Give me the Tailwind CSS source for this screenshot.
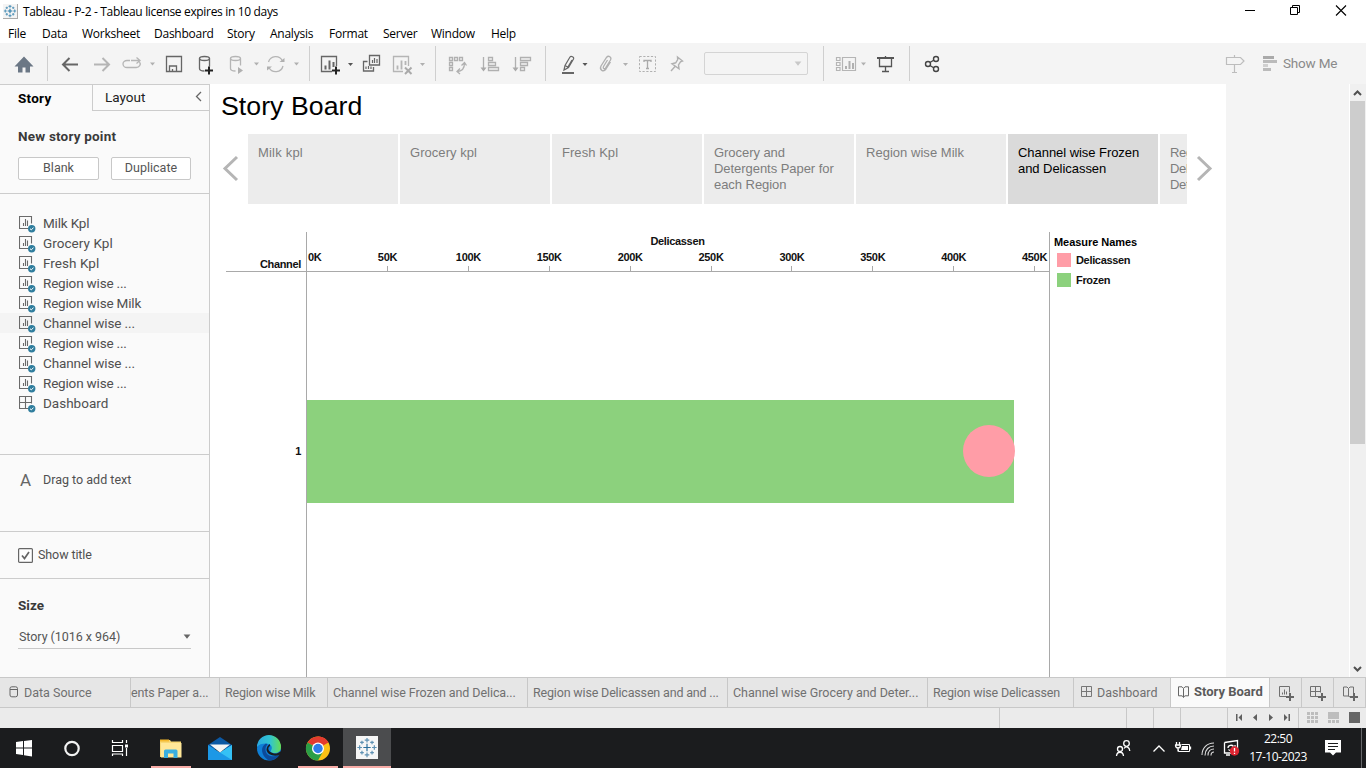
<!DOCTYPE html>
<html lang="en">
<head>
<meta charset="utf-8">
<title>Tableau - P-2</title>
<script src="https://cdn.jsdelivr.net/npm/@tailwindcss/browser@4"></script>
</head>
<body class="w-[1366px] h-[768px] overflow-hidden bg-white flex flex-col whitespace-nowrap">
<svg width="0" height="0" class="absolute">
  <symbol id="sheet" viewBox="0 0 17 17"><path d="M9.5 12.5H.5V.5h12v7M4.5 10V7M6.5 10V3M8.500 10V4.500" fill="none" stroke="#6a6a6a" stroke-width="1.100"/><circle cx="12.700" cy="12.700" r="3.700" fill="#2f7d9d"/><path d="M11 12.700l1.300 1.200 2.200-2.300" fill="none" stroke="#fff"/></symbol>
  <symbol id="dash" viewBox="0 0 17 17"><path d="M9.500 12.500H.5V.5h12v7M6.500 .5v12M.5 6.500h12" fill="none" stroke="#6a6a6a" stroke-width="1.100"/><circle cx="12.700" cy="12.700" r="3.700" fill="#2f7d9d"/><path d="M11 12.700l1.300 1.200 2.200-2.300" fill="none" stroke="#fff"/></symbol>
  <symbol id="tri" viewBox="0 0 6 4"><path d="M.3 .3h5.400L3 3.700z" fill="currentColor"/></symbol>
  <symbol id="tab" viewBox="0 0 24 24"><path d="M12 8v8M8 12h8" stroke="currentColor" fill="none"/><path d="M12 1.500v5M9.500 4h5M12 17.500v5M9.500 20h5M1.500 12h5M4 9.500v5M17.500 12h5M20 9.500v5M6.500 4.500v4M4.500 6.500h4M17.500 4.500v4M15.500 6.500h4M6.500 15.500v4M4.500 17.500h4M17.500 15.500v4M15.500 17.500h4" stroke="currentColor" fill="none" opacity=".75"/></symbol>
</svg>

<!-- Title bar -->
<header class="h-[22px] flex items-center font-['Open_Sans','Noto_Sans',sans-serif] text-black">
  <div class="ml-[3px] mt-px w-[15px] h-[15px] bg-[#f4f4f4] border-r border-b border-[#aaa] text-[#2779a8]"><svg class="w-[14px] h-[14px]"><use href="#tab" stroke-width="1.900"/></svg></div>
  <span class="ml-[5px] mt-[2px] text-[12px] tracking-[-0.33px]">Tableau - P-2 - Tableau license expires in 10 days</span>
  <svg class="ml-auto w-[136px] h-[22px]" viewBox="1230 0 136 22" fill="none" stroke="#000"><path d="M1245 10.500h10"/><path d="M1290.500 7.500h7v7h-7zM1292.500 7.500v-2h7v7h-2"/><path d="M1336 5.500l10 10M1346 5.500l-10 10" stroke-width="1.100"/></svg>
</header>
<!-- Menu -->
<nav class="h-[21px] flex items-center font-['Open_Sans','Noto_Sans',sans-serif] text-[12px] tracking-[-0.25px] text-black pl-[8px] pt-[3px]">
  <span class="w-[34px]">File</span><span class="w-[40px]">Data</span><span class="w-[72px]">Worksheet</span><span class="w-[73px]">Dashboard</span><span class="w-[43px]">Story</span><span class="w-[59px]">Analysis</span><span class="w-[54px]">Format</span><span class="w-[48px]">Server</span><span class="w-[60px]">Window</span><span>Help</span>
</nav>

<!-- Toolbar -->
<div class="h-[41px] flex items-center bg-[#f4f4f4] text-[#666] shrink-0">
  <svg class="w-[47px] h-[41px]" viewBox="0 43 47 41"><path d="M24 56.500L14.500 66.500H18v6h4.500v-5h3v5H30v-6h3.500z" fill="#6b7785"/></svg>
  <div class="w-px h-[35px] bg-[#cfcfcf]"></div>
  <svg class="w-[42px] h-[41px]" viewBox="48 43 42 41"><path d="M78 64.500H63M69.500 58L63 64.500l6.500 6.500" fill="none" stroke="#666" stroke-width="2"/></svg>
  <svg class="w-[26px] h-[41px]" viewBox="90 43 26 41"><path d="M94 64.500h15M102.500 58l6.500 6.500-6.500 6.500" fill="none" stroke="#b5b5b5" stroke-width="2"/></svg>
  <svg class="w-[44px] h-[41px]" viewBox="116 43 44 41"><path d="M130 60.500h-3a4 3.500 0 000 7h9a4 3.500 0 003.500-5.500M131 60.500h8M136.500 57.500l3.500 3-3.500 3" fill="none" stroke="#b5b5b5" stroke-width="1.300"/><path d="M150 62.500h5l-2.500 3z" fill="#b0b0b0"/></svg>
  <svg class="w-[30px] h-[41px]" viewBox="160 43 30 41"><path d="M166.500 56.500h15v15h-15zM169.500 71v-5h7v5M172.500 71v-2" fill="none" stroke="#666" stroke-width="1.300"/></svg>
  <svg class="w-[32px] h-[41px]" viewBox="190 43 32 41"><path d="M199.500 58.500v10c0 1 1.500 2.500 5 2.500M209.500 58.500v8" fill="none" stroke="#666" stroke-width="1.300"/><ellipse cx="204.500" cy="58.500" rx="5" ry="2" fill="none" stroke="#666" stroke-width="1.300"/><path d="M209 66.500v8M205 70.500h8" stroke="#222" stroke-width="2"/></svg>
  <svg class="w-[42px] h-[41px]" viewBox="222 43 42 41"><path d="M230.500 58.500v10c0 1 1.500 2.500 5 2.500M240.500 58.500v7" fill="none" stroke="#b5b5b5" stroke-width="1.300"/><ellipse cx="235.500" cy="58.500" rx="5" ry="2" fill="none" stroke="#b5b5b5" stroke-width="1.300"/><path d="M238 67l5 3.500-5 3.500zM254 62.500h5l-2.500 3z" fill="#b0b0b0"/></svg>
  <svg class="w-[45px] h-[41px]" viewBox="264 43 45 41"><path d="M268.500 62a7.500 7.500 0 0114 -1M283 66a7.500 7.500 0 01-14 1.500" fill="none" stroke="#b5b5b5" stroke-width="1.300"/><path d="M279.500 62h5v-4zM272 66.500h-5v4zM294 62.500h5l-2.500 3z" fill="#b0b0b0"/></svg>
  <div class="w-px h-[35px] bg-[#cfcfcf]"></div>
  <svg class="w-[49px] h-[41px]" viewBox="310 43 49 41"><path d="M332 71.500h-10.500v-15h15V66" fill="none" stroke="#666" stroke-width="1.300"/><path d="M325.500 69.500v-4M329.500 69.500v-9M333.500 67v-5" stroke="#666" stroke-width="2"/><path d="M336 66.500v8M332 70.500h8" stroke="#222" stroke-width="2"/><path d="M348 63h5l-2.500 3z" fill="#555"/></svg>
  <svg class="w-[28px] h-[41px]" viewBox="359 43 28 41"><path d="M369.500 55.500h10v9.500h-10zM367.500 61.500h-4v9.500h10v-4" fill="none" stroke="#666" stroke-width="1.300"/><path d="M372.500 63v-3M374.500 63v-5M377 63v-4M366 69v-2.500M368.500 69v-3M371 69v-2.500" stroke="#666" stroke-width="1.200"/></svg>
  <svg class="w-[48px] h-[41px]" viewBox="387 43 48 41"><path d="M403 71.500h-9.500v-15h15V66" fill="none" stroke="#b5b5b5" stroke-width="1.300"/><path d="M397.500 69.500v-4M401.500 69.500v-9M405.500 65v-4" stroke="#b5b5b5" stroke-width="1.800"/><path d="M405 67.500l6.500 6.500M411.500 67.500L405 74" stroke="#aaa" stroke-width="2"/><path d="M420 63h5l-2.500 3z" fill="#b0b0b0"/></svg>
  <div class="w-px h-[35px] bg-[#cfcfcf]"></div>
  <svg class="w-[109px] h-[41px]" viewBox="436 43 109 41" fill="none" stroke="#b0b0b0" stroke-width="1.300"><path d="M449.500 57.500h3v3h-3zM454.500 57.500h3v3h-3zM459.500 57.500h3v3h-3zM449.500 62.500h3v3h-3zM449.500 67.500h3v3h-3zM464.500 63c0 5-2.500 8.500-7.500 8.500M461.500 65.500l3-3 2 3M460 68.500l-3 3 3 2.500"/><path d="M483.500 57v13M515.500 57v13"/><path d="M480.500 67.500h6l-3 4zM512.500 67.500h6l-3 4z" fill="#aaa" stroke="none"/><path d="M488.500 57.500h4v3h-4zM488.500 62.500h7v3h-7zM488.500 67.500h10v3h-10zM520.500 57.500h10v3h-10zM520.500 62.500h7v3h-7zM520.500 67.500h4v3h-4z"/></svg>
  <div class="w-px h-[35px] bg-[#cfcfcf]"></div>
  <svg class="w-[48px] h-[41px]" viewBox="546 43 48 41"><path d="M564 70l1-4.500 5-8.500c1-1.500 4.500 0 3.500 2l-5 8.500zM565 65.500l3.500 2M567 68.500l5-8.500" fill="none" stroke="#666" stroke-width="1.200"/><path d="M562 73h12" stroke="#666" stroke-width="2"/><path d="M582.500 63h5l-2.500 3z" fill="#555"/></svg>
  <svg class="w-[38px] h-[41px]" viewBox="594 43 38 41"><path d="M607.500 60l-4 6.500c-1 2 1 3 2 1.500l5-8c1.500-3-2-5-4-2.500l-5.500 8.500c-2 4 2.500 6.500 5 3l4.500-7" fill="none" stroke="#b0b0b0" stroke-width="1.300"/><path d="M623 63h5l-2.500 3z" fill="#b0b0b0"/></svg>
  <svg class="w-[28px] h-[41px]" viewBox="632 43 28 41"><path d="M639.500 56.500h16v15h-16z" stroke-dasharray="2.200 1.600" fill="none" stroke="#b0b0b0"/><path d="M644 62v-1.500h7V62M647.500 60.500v8M646 68.500h3" fill="none" stroke="#aaa" stroke-width="1.300"/></svg>
  <svg class="w-[44px] h-[41px]" viewBox="660 43 44 41"><path d="M677.500 57l5 4-2 .8-2 3 .5 4-7-5 3.700-1 2-3.200zM675 66.500L671 71" fill="none" stroke="#b0b0b0" stroke-width="1.400"/></svg>
  <div class="w-[104px] h-[23px] border border-[#d4d4d4] rounded-[2px] flex items-center justify-end pr-[5px] text-[#c8c8c8]"><svg class="w-[8px] h-[5px]"><use href="#tri"/></svg></div>
  <div class="w-px h-[35px] bg-[#cfcfcf] ml-[15px]"></div>
  <svg class="w-[47px] h-[41px]" viewBox="824 43 47 41"><path d="M836.500 57.500h3.500v3h-3.500zM836.500 62.500h3.500v3h-3.500zM836.500 67.500h3.500v3h-3.500zM842.500 57.500h13v13h-13z" fill="none" stroke="#b5b5b5" stroke-width="1.200"/><path d="M846 69v-3M849.500 69v-8M853 69v-6" stroke="#b0b0b0" stroke-width="2"/><path d="M861 62.500h5l-2.500 3z" fill="#b0b0b0"/></svg>
  <svg class="w-[38px] h-[41px]" viewBox="871 43 38 41"><path d="M877 58h17" stroke="#555" stroke-width="2"/><path d="M879.500 59v7.500h12V59M885.500 56v2M885.500 67v5M882 71.500h7" fill="none" stroke="#555" stroke-width="1.300"/></svg>
  <div class="w-px h-[35px] bg-[#cfcfcf]"></div>
  <svg class="w-[42px] h-[41px]" viewBox="910 43 42 41" fill="none" stroke="#444" stroke-width="1.400"><circle cx="928" cy="64" r="2.500"/><circle cx="936" cy="59" r="2.500"/><circle cx="936" cy="69" r="2.500"/><path d="M930 62.500l4-2.500M930 65.500l4 2.500"/></svg>
  <svg class="ml-auto w-[62px] h-[41px]" viewBox="1221 43 62 41"><path d="M1226.500 57.500h14l3.500 3.500-3.500 3.500h-14zM1234.500 55v2M1234.500 65v7.500M1232 72.500h5" fill="none" stroke="#bdbdbd" stroke-width="1.200"/><path d="M1263 56h11v3h-11z" fill="#aaa"/><path d="M1263 60h14v3h-14z" fill="#bbb"/><path d="M1263 64h5v3h-5z" fill="#d0d0d0"/><path d="M1263 68h8v3h-8z" fill="#bbb"/></svg>
  <span class="w-[83px] font-['Roboto',sans-serif] text-[13.500px] tracking-[-0.2px] text-[#8a8a8a]">Show Me</span>
</div>

<main class="h-[593px] flex">
  <!-- Side pane -->
  <aside class="w-[210px] h-full bg-[#fafafa] border-r border-[#ccc] flex flex-col font-['Roboto',sans-serif] text-[#505050]">
    <div class="flex h-[27px] border-t border-[#ccc]">
      <div class="w-[92px] pl-[18px] pt-[3px] text-[13.500px] leading-[20px] font-bold text-black tracking-[0.25px]">Story</div>
      <div class="flex-1 border-l border-b border-[#ccc] pl-[12px] pt-[2px] pr-[7px] flex justify-between text-[13.5px] text-[#222]"><span>Layout</span><svg class="w-[7px] h-[12px] mt-[4px]" viewBox="0 0 7 12"><path d="M6 1L1.500 5.500 6 10" fill="none" stroke="#666" stroke-width="1.300"/></svg></div>
    </div>
    <div class="h-[83px] border-b border-[#ccc] px-[18px] pt-[15px]">
      <div class="h-[31px] text-[13.500px] leading-[20px] font-bold text-[#3a3a3a] tracking-[0.2px]">New story point</div>
      <div class="flex justify-between text-[12.500px] text-[#555]">
        <button class="w-[81px] h-[23px] border border-[#c8c8c8] rounded-[2px] bg-white">Blank</button>
        <button class="w-[80px] h-[23px] border border-[#c8c8c8] rounded-[2px] bg-white">Duplicate</button>
      </div>
    </div>
    <div class="h-[261px] border-b border-[#ccc] pt-[19px] text-[13.500px] leading-[20px] tracking-[-0.18px]">
      <div class="h-5 flex pl-[19px] gap-[7px]"><svg class="w-[17px] h-[17px] mt-[3px]"><use href="#sheet"/></svg><span>Milk Kpl</span></div>
      <div class="h-5 flex pl-[19px] gap-[7px]"><svg class="w-[17px] h-[17px] mt-[3px]"><use href="#sheet"/></svg><span class="tracking-[0.05px]">Grocery Kpl</span></div>
      <div class="h-5 flex pl-[19px] gap-[7px]"><svg class="w-[17px] h-[17px] mt-[3px]"><use href="#sheet"/></svg><span class="tracking-[0.05px]">Fresh Kpl</span></div>
      <div class="h-5 flex pl-[19px] gap-[7px]"><svg class="w-[17px] h-[17px] mt-[3px]"><use href="#sheet"/></svg><span>Region wise ...</span></div>
      <div class="h-5 flex pl-[19px] gap-[7px]"><svg class="w-[17px] h-[17px] mt-[3px]"><use href="#sheet"/></svg><span>Region wise Milk</span></div>
      <div class="h-5 flex pl-[19px] gap-[7px] bg-[#f4f4f4]"><svg class="w-[17px] h-[17px] mt-[3px]"><use href="#sheet"/></svg><span class="tracking-[-0.12px]">Channel wise ...</span></div>
      <div class="h-5 flex pl-[19px] gap-[7px]"><svg class="w-[17px] h-[17px] mt-[3px]"><use href="#sheet"/></svg><span>Region wise ...</span></div>
      <div class="h-5 flex pl-[19px] gap-[7px]"><svg class="w-[17px] h-[17px] mt-[3px]"><use href="#sheet"/></svg><span class="tracking-[-0.12px]">Channel wise ...</span></div>
      <div class="h-5 flex pl-[19px] gap-[7px]"><svg class="w-[17px] h-[17px] mt-[3px]"><use href="#sheet"/></svg><span>Region wise ...</span></div>
      <div class="h-5 flex pl-[19px] gap-[7px]"><svg class="w-[17px] h-[17px] mt-[3px]"><use href="#dash"/></svg><span class="tracking-normal">Dashboard</span></div>
    </div>
    <div class="h-[77px] border-b border-[#ccc] pl-[20px] pt-[15px] flex text-[12.500px] leading-[20px]"><span class="w-[23px] text-[17px] text-[#666] leading-[20px]">A</span><span>Drag to add text</span></div>
    <div class="h-[47px] border-b border-[#ccc] pl-[18px] flex items-center gap-[5px] text-[12.500px] tracking-[-0.1px]"><svg class="w-[15px] h-[15px]" viewBox="0 0 15 15" fill="none"><rect x=".6" y=".6" width="13.800" height="13.800" rx="1" fill="#fff" stroke="#666" stroke-width="1.200"/><path d="M4 7.500l2.500 3L11 4" stroke="#666" stroke-width="1.700"/></svg><span>Show title</span></div>
    <div class="px-[18px] pt-[16px]">
      <div class="text-[13.500px] leading-[20px] font-bold text-[#3a3a3a]">Size</div>
      <div class="mt-[10px] h-[24px] border-b border-[#c8c8c8] pl-px flex items-center justify-between text-[12.500px] text-[#555]"><span class="pt-px tracking-[-0.05px]">Story (1016 x 964)</span><svg class="w-[8px] h-[5px] text-[#666]"><use href="#tri"/></svg></div>
    </div>
  </aside>

  <!-- Story canvas -->
  <section class="w-[1016px] h-full bg-white flex flex-col font-['Liberation_Sans',Arial,sans-serif]">
    <h1 class="h-[50px] pl-[11px] pt-[6px] text-[26.67px] leading-[32px] text-black tracking-[0.05px]">Story Board</h1>
    <div class="h-[70px] flex">
      <svg class="w-[38px] h-[70px]" viewBox="210 134 38 70"><path d="M237 157L225 168.500l12 11.500" fill="none" stroke="#b5b5b5" stroke-width="3"/></svg>
      <div class="w-[939px] flex gap-[2px] overflow-hidden text-[13px] leading-[16px] text-[#7d7d7d] tracking-[-0.05px]">
        <div class="w-[150px] shrink-0 bg-[#ececec] pl-[10px] pt-[11px] tracking-[0.2px]">Milk kpl</div>
        <div class="w-[150px] shrink-0 bg-[#ececec] pl-[10px] pt-[11px] tracking-[0.05px]">Grocery kpl</div>
        <div class="w-[150px] shrink-0 bg-[#ececec] pl-[10px] pt-[11px] tracking-[0.05px]">Fresh Kpl</div>
        <div class="w-[150px] shrink-0 bg-[#ececec] pl-[10px] pt-[11px]">Grocery and<br>Detergents Paper for<br>each Region</div>
        <div class="w-[150px] shrink-0 bg-[#ececec] pl-[10px] pt-[11px] tracking-[0.03px]">Region wise Milk</div>
        <div class="w-[150px] shrink-0 bg-[#dadada] pl-[10px] pt-[11px] text-black">Channel wise Frozen<br>and Delicassen</div>
        <div class="w-[150px] shrink-0 bg-[#ececec] pl-[10px] pt-[11px] tracking-[-0.3px]">Region wise<br>Delicassen and<br>Detergents</div>
      </div>
      <svg class="w-[39px] h-[70px]" viewBox="1187 134 39 70"><path d="M1198 157L1210 168.500l-12 11.500" fill="none" stroke="#b5b5b5" stroke-width="3"/></svg>
    </div>
    <div class="mt-[28px] flex flex-1 pl-[16px] text-[11px] text-[#111] font-bold tracking-[-0.33px]">
      <div class="w-[81px] border-r border-[#a9a9a9] flex flex-col text-right pr-[5px]">
        <div class="-mr-[6px] pr-[6px] h-[40px] border-b border-[#a9a9a9] pt-[24px] leading-[16px]">Channel</div>
        <div class="h-[359px] flex items-center justify-end">1</div>
      </div>
      <div class="w-[743px] border-r border-[#a9a9a9]">
        <div class="-mr-px h-[40px] border-b border-[#a9a9a9]">
          <div class="h-[17px] pt-px pr-[2px] leading-[16px] text-center">Delicassen</div>
          <div class="h-[17px] leading-[16px] flex text-center">
            <span class="w-[40px] pl-px text-left">0K</span><span class="w-[80.900px]">50K</span><span class="w-[80.900px]">100K</span><span class="w-[80.900px]">150K</span><span class="w-[80.900px]">200K</span><span class="w-[80.900px]">250K</span><span class="w-[80.900px]">300K</span><span class="w-[80.900px]">350K</span><span class="w-[80.900px]">400K</span><span class="flex-1 text-right pr-[3px]">450K</span>
          </div>
          <svg class="w-[743px] h-[5px]"><path d="M80.500 0v5M161.500 0v5M242.500 0v5M323.500 0v5M404.500 0v5M484.500 0v5M565.500 0v5M646.500 0v5M727.500 0v5" stroke="#a9a9a9"/></svg>
        </div>
        <svg class="w-[742px] h-[405px]" viewBox="307 272 742 405"><path d="M307 400h707v103H307z" fill="#8cd17d"/><circle cx="989" cy="451" r="26" fill="#ff9da7"/></svg>
      </div>
      <div class="pl-[4px] pt-[2px]">
        <div class="leading-[16px] text-black tracking-[-0.05px]">Measure Names</div>
        <div class="h-5 flex items-center pl-[3px] gap-[5px]"><i class="w-[14px] h-[14px] bg-[#ff9da7]"></i>Delicassen</div>
        <div class="h-5 flex items-center pl-[3px] gap-[5px]"><i class="w-[14px] h-[14px] bg-[#8cd17d]"></i>Frozen</div>
      </div>
    </div>
  </section>
  <div class="flex-1 bg-[#f4f4f4] border-r border-white"></div>
  <div class="w-[16px] bg-[#f0f0f0] flex flex-col">
    <svg class="w-[16px] h-[17px]" viewBox="0 0 16 17"><path d="M4 11l3.500-3.500L11 11" fill="none" stroke="#505050" stroke-width="2"/></svg>
    <div class="w-[15px] h-[343px] bg-[#cdcdcd]"></div>
    <svg class="w-[16px] h-[17px] mt-auto" viewBox="0 0 16 17"><path d="M4 7l3.500 3.500L11 7" fill="none" stroke="#505050" stroke-width="2"/></svg>
  </div>
</main>

<!-- Sheet tabs -->
<div class="h-[31px] shrink-0 bg-[#e6e6e6] border-y border-[#c8c8c8] flex leading-[29px] font-['Roboto',sans-serif] text-[12.500px] text-[#707070]">
  <div class="w-[131px] border-r border-[#c8c8c8] pl-[9px] flex gap-[5px]"><svg class="w-[10px] h-[12px] mt-[8px]" viewBox="0 0 10 12" fill="none" stroke="#666"><rect x="1" y=".8" width="7.500" height="10" rx="1.800"/><path d="M1 3.500h7.500"/></svg><span>Data Source</span></div>
  <div class="w-[89px] border-r border-[#c8c8c8] overflow-hidden tracking-[-0.13px]">ents Paper a...</div>
  <div class="w-[108px] border-r border-[#c8c8c8] pl-[5px] tracking-[-0.2px]">Region wise Milk</div>
  <div class="w-[200px] border-r border-[#c8c8c8] pl-[5px] tracking-[-0.09px]">Channel wise Frozen and Delica...</div>
  <div class="w-[200px] border-r border-[#c8c8c8] pl-[5px] tracking-[-0.17px]">Region wise Delicassen and and ...</div>
  <div class="w-[200px] border-r border-[#c8c8c8] pl-[5px] tracking-[-0.02px]">Channel wise Grocery and Deter...</div>
  <div class="w-[146px] border-r border-[#c8c8c8] pl-[5px] tracking-[-0.18px]">Region wise Delicassen</div>
  <div class="w-[97px] border-r border-[#c8c8c8] pl-[7px] flex gap-[5px]"><svg class="w-[11px] h-[11px] mt-[8px]" viewBox="0 0 11 11" fill="none" stroke="#777"><path d="M.5 .5h10v10H.5zM5.500 .5v10M.5 5.500h10"/></svg><span>Dashboard</span></div>
  <div class="w-[99px] border-r border-[#c8c8c8] bg-[#fafafa] pl-[7px] flex gap-[5px] text-[13px] font-bold text-[#5a5a5a] leading-[27px]"><svg class="w-[11px] h-[12px] mt-[8px]" viewBox="0 0 11 12" fill="none" stroke="#666"><path d="M5.500 2.500L4 .8H.5v9H4l1.500 1.400L7 9.800h3.500v-9H7zM5.500 2.500v9"/></svg><span>Story Board</span></div>
  <svg class="w-[96px] h-[29px]" viewBox="1270 678 96 29" fill="none" stroke="#707070"><path d="M1287 696.500h-7.500v-10h10v6M1282.500 694.500v-2M1284.500 694.500v-5M1286.500 694.500v-3M1318 696.500h-7.500v-10h10v6M1315.500 686.500v10M1310.500 691.500h10M1350 697l-1.500-1h-5v-9h3.500l1.500 1.500 1.500-1.500h3.500v6M1348.500 688.500v8"/><path d="M1290 693v8M1286 697h8M1322 693v8M1318 697h8M1354 693v8M1350 697h8" stroke="#666" stroke-width="2"/><path d="M1301.500 678v29M1333.500 678v29M1365.500 678v29" stroke="#c8c8c8"/></svg>
</div>

<!-- Status bar -->
<div class="h-[20px] shrink-0 bg-[#ebebeb] flex justify-end">
  <div class="w-[127px] border-l border-[#c8c8c8]"></div><div class="w-[27px] border-l border-[#c8c8c8]"></div><div class="w-[27px] border-l border-[#c8c8c8]"></div><div class="w-[47px] border-l border-[#c8c8c8]"></div>
  <svg class="w-[139px] h-[20px]" viewBox="1227 708 139 20"><path d="M1227.500 708v20M1298.500 708v20" stroke="#c8c8c8"/><path d="M1236 714h1.500v7h-1.500zM1242 714v7l-3.500-3.500zM1257 714v7l-4-3.500zM1269 714v7l4-3.500zM1284 714v7l3.500-3.500zM1288.500 714h1.500v7h-1.500z" fill="#5f5f5f"/><path d="M1307 712h3v3h-3zM1311 712h3v3h-3zM1315 712h3v3h-3zM1307 716h3v3h-3zM1311 716h3v3h-3zM1315 716h3v3h-3zM1307 720h3v3h-3zM1311 720h3v3h-3zM1315 720h3v3h-3zM1328 712h11v7h-11zM1328 720h3v3h-3zM1332 720h3v3h-3zM1336 720h3v3h-3z" fill="#bdbdbd"/><path d="M1349 712h11v11h-11z" fill="#666"/></svg>
</div>

<!-- Taskbar -->
<footer class="h-[40px] shrink-0 bg-[#1b1c1e] flex text-white">
  <svg class="w-[48px] h-[40px]" viewBox="0 728 48 40"><path d="M16 742l7-1v6.500h-7zM24 741l8-1v7.500h-8zM16 748.500h7v6.500l-7-1zM24 748.500h8v8l-8-1.200z" fill="#fff"/></svg>
  <svg class="w-[48px] h-[40px]" viewBox="48 728 48 40"><circle cx="72" cy="748.500" r="6.700" fill="none" stroke="#f2f2f2" stroke-width="2.200"/></svg>
  <svg class="w-[50px] h-[40px]" viewBox="96 728 50 40" fill="none" stroke="#fff" stroke-width="1.200"><path d="M112.500 740v2.500h10V740M112.500 745.500h10v6h-10zM112.500 756v-2h10v2M126.500 740v3M126.500 748v8"/><path d="M125 744.500h3v3h-3z" fill="#fff" stroke="none"/></svg>
  <svg class="w-[51px] h-[40px]" viewBox="146 728 51 40"><path d="M160 740h10l1 1.500h10V757h-21z" fill="#f7d774"/><path d="M160 739.500h9v2h-9z" fill="#f5b92e"/><path d="M161 743h20.500v14.500H161z" fill="#ffe798"/><path d="M164 758v-7q0-1.500 1.500-1.500h10.500q1.500 0 1.500 1.500v7h-4v-4.500h-5.500v4.500z" fill="#3aaee0"/><path d="M151 766h40v2h-40z" fill="#f8aca7"/></svg>
  <svg class="w-[49px] h-[40px]" viewBox="197 728 49 40"><path d="M208 745l12-8 12 8v4h-24z" fill="#0c59a4"/><path d="M208 745l12 7.500 12-7.500v15h-24z" fill="#1c98e6"/><path d="M232 745v15l-12-7.500z" fill="#35c1f5"/><path d="M210 744.500h20l-10 8z" fill="#f5f5f5"/></svg>
  <svg class="w-[49px] h-[40px]" viewBox="246 728 49 40"><defs><linearGradient id="eg" x1="0" x2="1"><stop offset="0" stop-color="#2aa8e0"/><stop offset=".55" stop-color="#31c5d0"/><stop offset="1" stop-color="#66dd55"/></linearGradient></defs><circle cx="269" cy="748.500" r="12" fill="#0f7fd6"/><path d="M257 747a12 12 0 0124 0c0 4-3 6-6.500 6-3 0-4.500-1-3.500-2.500 2-3 .5-7-5-7-4 0-7.500 1-9 3.500z" fill="url(#eg)"/><path d="M266 743.500c-6 3-5 12 2 16.500 5 1.500 9-1.500 11.500-5-6 3-14 1-14-5.500 0-2 .5-4 2-5z" fill="#0c4a9a"/><path d="M270 746c-3 2-2 6 4 7.500 2 .3 5-.5 6.500-2l1 0-1 3c-5 2.500-13 1-14-4.500 0-3 1.500-5 3.500-6z" fill="#1b1c1e"/></svg>
  <svg class="w-[48px] h-[40px]" viewBox="295 728 48 40"><circle cx="318" cy="748.500" r="12" fill="#fbc116"/><path d="M318 748.500L307.600 742.500a12 12 0 0120.800 0z" fill="#e33b2e"/><path d="M318 736.500a12 12 0 0110.400 6H318z" fill="#e33b2e"/><path d="M307.600 742.500L318 748.500l5 3-5 9a12 12 0 01-10.400-18z" fill="#2a9e47"/><circle cx="318" cy="748.500" r="6" fill="#fff"/><circle cx="318" cy="748.500" r="4.700" fill="#2f7de9"/><path d="M298 766h40v2h-40z" fill="#f8aca7"/></svg>
  <div class="w-[48px] h-[40px] bg-[#4b4c4e] border-b-2 border-[#f8aca7] flex justify-center pt-[8px]"><div class="w-[22px] h-[23px] bg-[#f6f6f6] text-[#2b6f9c]"><svg class="w-[22px] h-[23px]"><use href="#tab" stroke-width="1.300"/></svg></div></div>
  <svg class="ml-auto w-[138px] h-[40px]" viewBox="1107 728 138 40" fill="none" stroke="#fff" stroke-width="1.300"><circle cx="1126.500" cy="743.500" r="2.800"/><circle cx="1120" cy="749" r="2.500"/><path d="M1116.500 756c.5-5 6.500-5 7 0M1124 748.500c2-3 5.500-1.500 5.800 2.500"/><path d="M1153.500 751.500l5.500-5.500 5.500 5.500"/><path d="M1181.500 744.500h8v7h-11v-2" stroke-width="1"/><path d="M1182 746h6v4h-7z" fill="#fff" stroke="none"/><path d="M1190.500 746.500v3M1176.500 742v3M1179.500 742v3M1175 745h5.500c0 4-5 4-5 0M1178 748v3.500"/><g stroke-width="1.100"><path d="M1202 755c0-7 5-12 12-12M1205 755.500c0-6 4-9.500 9-9.500M1208 755.500c0-4 2.500-6.500 6-6.500M1211 755.500c0-2 1-3.500 3-3.500" stroke="#ddd"/></g><path d="M1224.500 742.500l13-2v12M1224.500 742.500v10.500h7M1226 755h4M1228 748c0-3 4-3.500 5.500-1.500M1235 745v2.500M1233.500 749c-1 2-4 2-5 .5"/><circle cx="1234.500" cy="751" r="4.700" fill="#dd2430" stroke="none"/><path d="M1234.500 748v3.500M1234.500 752.700v1.200"/></svg>
  <div class="w-[66px] text-center pt-[2px] font-['Open_Sans','Noto_Sans',sans-serif] text-[12px] leading-[18px] tracking-[-0.5px]">22:50<br>17-10-2023</div>
  <svg class="w-[55px] h-[40px]" viewBox="1311 728 55 40"><path d="M1325 740h16v12.500h-5l-3 3-3-3h-5z" fill="#fff"/><path d="M1328 743.500h10M1328 746.500h10M1328 749.500h7" stroke="#1b1c1e" stroke-width="1.100"/><path d="M1361.500 728v40" stroke="#66676a"/></svg>
</footer>
</body>
</html>
